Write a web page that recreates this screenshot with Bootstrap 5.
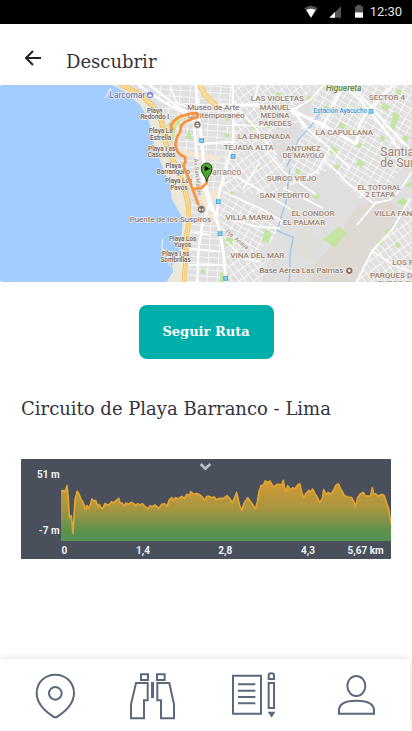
<!DOCTYPE html>
<html lang="es">
<head>
<meta charset="utf-8">
<meta name="viewport" content="width=device-width, initial-scale=1">
<title>Descubrir</title>
<link href="https://cdn.jsdelivr.net/npm/bootstrap@5.3.0/dist/css/bootstrap.min.css" rel="stylesheet">
<script src="https://cdn.jsdelivr.net/npm/bootstrap@5.3.0/dist/js/bootstrap.bundle.min.js" defer></script>
<style>
body { font-family: "Roboto Slab", "DejaVu Serif", serif; color: #33333d; background: #fff; }
.status-bar { height: 24px; background: #000; color: #e0e0e0; font: 13px/24px Roboto, sans-serif; padding-right: 10px; }
.app-header { height: 61px; padding: 0 24px; gap: 24px; }
.back-link { color: #222; line-height: 1; padding-top: 6px; }
.screen-title { font-size: 18px; line-height: 24px; padding-top: 14px; }
.route-map text { font-family: Roboto, sans-serif; fill: #9a8474; stroke: #f2f0ed; stroke-width: 4px; paint-order: stroke; text-anchor: middle; }
.route-map .area-name { font-size: 24px; font-weight: 500; }
.route-map .area-name .stacked { font-size: 23px; }
.route-map .spot-name { font-size: 24px; }
.route-map .spot-name text { fill: #7b6556; }
.route-map .beach-name { font-size: 19px; font-weight: 500; }
.route-map .beach-name text { fill: #6f6056; }
.btn-route { --bs-btn-bg: #00afaa; --bs-btn-color: #fff; --bs-btn-hover-bg: #009c97; --bs-btn-hover-color: #fff; --bs-btn-active-bg: #008c88; --bs-btn-active-color: #fff; --bs-btn-border-color: transparent; --bs-btn-hover-border-color: transparent;
  font-size: 13px; line-height: 20px; font-weight: 700; padding: 16px 20px; border-radius: 8px; min-width: 135px; margin: 23px 0 36px; }
.route-body { padding: 0 21px; }
.route-name { font-size: 18px; line-height: 28px; margin-bottom: 36px; }
.profile text { font: 700 30px Roboto, sans-serif; fill: #eef2f8; }
.tab-bar { background: #fff; padding: 13px 28px 11px 30px; margin-right: 2px; border-radius: 0 4px 0 0; box-shadow: 0 0 10px rgba(0, 0, 0, .14); }
.tab-bar svg { width: 52px; height: 48px; fill: none; stroke: #5a6a7c; stroke-width: 6; }
</style>
</head>
<body class="d-flex flex-column min-vh-100 overflow-x-hidden">
<div class="status-bar d-flex justify-content-end align-items-center">
  <svg width="68" height="24" viewBox="900 0 204 72" aria-hidden="true">
    <path fill="#555" d="M907 25Q927 10 947 25L927 53z"/><path fill="#fff" d="M913 30Q927 22 941 30L927 53z"/>
    <path fill="#555" d="M1017 19V53H982z"/><path fill="#fff" d="M999 36V53H982z"/>
    <path fill="#555" d="M1059 19h6v-4h12v4h6v18h-24z"/><path fill="#fff" d="M1059 37h24v16h-24z"/>
  </svg>
  <span>12:30</span>
</div>
<header class="app-header d-flex align-items-center">
  <a href="#" class="back-link" aria-label="Volver"><svg width="18" height="18" viewBox="0 0 18 18" fill="none" stroke="currentColor" stroke-width="2"><path d="M17 9H2M9 2 2 9l7 7"/></svg></a>
  <h1 class="screen-title fw-normal mb-0">Descubrir</h1>
</header>
<main class="flex-grow-1">
  <svg class="route-map d-block w-100" viewBox="-330 0 1236 591" role="img" aria-label="Mapa de la ruta">
    <defs>
      <pattern id="gridA" width="24" height="17" patternUnits="userSpaceOnUse" patternTransform="rotate(30)"><path d="M0 0H24M0 0V17" stroke="#fff" stroke-width="4" fill="none"/></pattern>
      <pattern id="gridB" width="30" height="19" patternUnits="userSpaceOnUse" patternTransform="rotate(4)"><path d="M0 0H30M0 0V19" stroke="#fff" stroke-width="4" fill="none"/></pattern>
      <pattern id="gridC" width="17" height="26" patternUnits="userSpaceOnUse" patternTransform="rotate(-36)"><path d="M0 0H17M0 0V26" stroke="#fff" stroke-width="4" fill="none"/></pattern>
      <clipPath id="frame"><rect x="-330" width="1236" height="591" rx="6"/></clipPath>
    </defs>
    <g clip-path="url(#frame)">
      <rect x="-330" width="1236" height="591" fill="#a3ccff"/>
      <path fill="#e0e0e0" d="M5 0 40 18 88 58 108 90 124 125 130 170 146 218 163 260 180 300 184 340 205 378 218 400 216 440 210 470 208 500 186 545 190 560 170 591H906V0z"/>
      <path fill="#ece8d9" d="M25 0 90 58 112 95 128 140 132 170 165 262 182 300 186 340 220 400 214 460 208 500 186 545 190 560 170 591H225L240 400 215 300 170 200 150 110 80 20z"/>
      <path fill="none" stroke="#e6edf2" stroke-width="4" d="M-15 40 2 10M182 545 168 500 155 490 158 462M165 510 154 520"/>
      <!-- street blocks -->
      <path fill="url(#gridB)" d="M130 0H370V170L365 290 300 330 225 300 175 170 160 80z"/>
      <path fill="url(#gridC)" d="M370 0H610L550 100 600 130 540 180 500 330 330 320 370 170z"/>
      <path fill="url(#gridA)" d="M610 0H906V150L880 240 830 320 760 360 700 300 520 310 560 170 600 120z"/>
      <path fill="url(#gridA)" d="M340 320 450 370 520 410 510 450 440 500 350 480 320 380z"/>
      <path fill="url(#gridB)" d="M245 350 320 400 340 591H215L240 420z"/>
      <path fill="url(#gridC)" d="M350 440 440 500 470 520 455 591H350z"/>
      <path fill="url(#gridC)" d="M906 340V591H730L745 540 790 490 860 400z"/>
      <!-- open ground -->
      <path fill="#dedede" d="M500 115 550 110 580 140 540 190 505 230 485 180z"/>
      <path fill="#dfdfdf" d="M540 300 660 255 750 340 840 345 870 320 890 400 780 500 730 591H460L480 540 500 440 540 400z"/>
      <path fill="#dfd9d4" d="M745 360 830 345 870 370 845 430 790 480 735 591H590L620 530 690 460 710 410z"/>
      <path fill="#dedfd8" d="M570 430 640 465 600 530 540 490z"/>
      <path fill="#f5e5d3" d="M210 192 330 215 325 228 220 212zM262 320 325 315 320 345 300 350 320 410 300 415 280 355 262 345zM360 200h22v25h-22z"/>
      <!-- parks -->
      <g fill="#c4e5a1">
        <path d="M238 132 248 165 225 160zM170 120 200 95 230 85 200 125 186 180 178 160zM405 110 450 122 435 137zM460 112 500 122 470 130zM688 425 712 443 675 488 640 463zM465 432 485 445 475 475 455 468zM350 455 370 463 365 488 345 480zM663 180 685 195 675 212 655 200zM645 60 670 72 655 84 640 75zM690 112 710 120 700 132 684 125zM770 60 792 70 780 88 760 80zM820 52 840 65 830 78 812 68zM850 80 870 90 850 140 840 130zM745 222 765 232 755 248 738 238zM560 250 575 258 565 270 555 262zM615 322 630 330 620 345 608 335zM680 235 692 242 682 256 672 248zM745 170 758 180 748 190 738 180zM595 30 610 38 600 50 590 42zM860 352l20-14 15 16-18 8zM885 300l20-10v20zM330 565h25v26h-25zM350 90l12 8-8 12-12-8zM345 145l13 3-3 12-12-4zM300 370l12 4-3 12-10-4zM272 553h12v12h-12z"/>
        <path d="M720 20l15-6-6 20zM860 10l16 5-5 16-13-6zM880 150l18 6-8 14-14-6zM815 150l12 8-8 12-11-7zM500 20l13 5-5 12-12-5zM440 240l10 5-5 9-9-5zM808 460l14 9-8 14-13-9zM830 430l12 8-8 12-10-8zM860 470l12 8-8 12-10-8zM545 195l10 6-8 12-9-6z"/>
        <circle cx="364" cy="325" r="6"/>
      </g>
      <path fill="none" stroke="#9cc3f3" stroke-width="4" d="M640 70 605 120 565 165 545 215 530 245M540 250 528 350 512 400 502 437 550 458 541 500 538 591"/>
      <!-- avenues -->
      <g fill="none" stroke="#fff" stroke-linejoin="round">
        <path stroke-width="9" d="M258 0 262 70 275 165 284 290 308 370 325 420 340 500 348 591M305 60H440L540 72 640 122 740 178M545 70 590 130M635 130 700 0M740 178 748 120 775 75 850 0"/>
        <path stroke-width="7" d="M368 0 370 170 328 320 318 410M255 178 370 170M85 0 160 50 230 88M118 0 210 70 230 80M250 90 262 240 300 350 275 430 265 500 262 591M262 240 305 380M700 0 750 45 820 130 885 215M715 0 765 45 835 125 906 200"/>
        <path stroke-width="5" d="M370 270 440 310 545 375M455 180 520 260 620 330M640 0 600 45 540 80M590 130 660 190 720 250M660 190 620 260 540 300M180 0 200 55 260 75M340 320 450 370 520 410M640 220 720 300 790 355 840 345 870 315 906 260M740 420 800 350M350 400 440 425 510 430M350 470 400 520 450 530M445 0 430 60M520 310 640 370M370 60 430 120 500 210M450 230 400 310M370 120 540 125M900 340 850 430 785 500 740 591M790 500 850 540 906 560M230 440 300 450M230 490 335 500M225 540 340 540"/>
      </g>
      <g fill="none" stroke-linejoin="round" stroke-linecap="round">
        <path stroke="#ebbf68" stroke-width="15" d="M35 0 95 30 130 65 155 110 162 160 177 205 200 245 218 290 233 350 238 400 229 460 228 520 222 591M270 0 285 30 318 62"/>
        <path stroke="#ffdf95" stroke-width="10" d="M35 0 95 30 130 65 155 110 162 160 177 205 200 245 218 290 233 350 238 400 229 460 228 520 222 591M270 0 285 30 318 62"/>
        <path stroke="#ffdf95" stroke-width="6" d="M230 92 195 108 178 155 165 175"/>
        <path stroke="#ebbf68" stroke-width="2" d="M35 0 95 30 130 65 155 110 162 160 177 205 200 245 218 290 233 350 238 400 229 460 228 520 222 591"/>
      </g>
      <g fill="#3aa9e8"><path d="M268 160h14v14h-14zM362 207h14v14h-14zM318 343h14v14h-14zM323 439h14v14h-14zM340 573h14v14h-14zM776 72h14v14h-14z"/></g>
      <path stroke="#fff" stroke-width="2" d="M271 165h8M365 212h8M321 348h8M326 444h8M343 578h8M779 77h8M271 169h8M365 216h8M321 352h8M326 448h8M343 582h8M779 81h8"/>
      <g stroke="#fff" stroke-width="2"><circle cx="120" cy="30" r="11" fill="#6c7fc6"/><circle cx="262" cy="119" r="11" fill="#826a5b"/><circle cx="274" cy="373" r="12" fill="#826a5b"/><circle cx="718" cy="557" r="11" fill="#826a5b"/></g>
      <path fill="#fff" d="M115 29h10v6h-10zM256 118l6-5 6 5zM257 120h10v4h-10zM268 378v-9l6 5 6-5v9h-3v-4h-6v4z"/><path fill="none" stroke="#fff" stroke-width="2" d="M117 29q3-8 6 0"/><circle cx="718" cy="557" r="4" fill="#fff"/>

      <text x="52" y="38" font-size="25" style="fill:#5266a8">Larcomar</text>
      <g class="beach-name">
        <text x="134" y="84">Playa</text><text x="134" y="103">Redondo I</text>
        <text x="152" y="145">Playa La</text><text x="152" y="164">Estrella</text>
        <text x="155" y="197">Playa Las</text><text x="155" y="216">Cascadas</text>
        <text x="190" y="249">Playa</text><text x="190" y="268">Barranquito</text>
        <text x="206" y="295">Playa Los</text><text x="207" y="314">Pavos</text>
        <text x="218" y="467">Playa Los</text><text x="218" y="486">Yuyos</text>
        <text x="197" y="513">Playa Las</text><text x="197" y="531">Sombrillas</text>
      </g>
      <g class="spot-name">
        <text x="310" y="75">Museo de Arte</text><text x="318" y="99">Contemporaneo</text>
        <text x="181" y="410">Puente de los Suspiros</text><text x="574" y="565">Base Aérea Las Palmas</text>
      </g>
      <text x="350" y="271" font-size="26">arranco</text>
      <g class="area-name">
        <text x="502" y="47">LAS VIOLETAS</text>
        <g class="stacked"><text x="495" y="76">MANUEL</text><text x="495" y="99">MEDINA</text><text x="496" y="122">PAREDES</text>
        <text x="580" y="197">ANTUNEZ</text><text x="580" y="220">DE MAYOLO</text><text x="808" y="314">EL TOTORAL</text><text x="810" y="337">2 ETAPA</text></g>
        <text x="462" y="161">LA ENSENADA</text><text x="416" y="195">TEJADA ALTA</text>
        <text x="703" y="151">LA CAPULLANA</text><text x="831" y="46">SECTOR 4</text><text x="545" y="289">SURCO VIEJO</text><text x="524" y="340">SAN PEDRITO</text>
        <text x="609" y="392">EL CONDOR</text><text x="582" y="421">EL PALMAR</text>
        <text x="419" y="405">VILLA MARIA</text><text x="792" y="394" style="text-anchor:start">VILLA FANNY</text><text x="442" y="518">VINA DEL MAR</text>
        <text x="847" y="539" style="text-anchor:start">LOS ROSALES</text><text x="780" y="579" style="text-anchor:start">PARQUES DE</text><text x="802" y="602" style="text-anchor:start">SURCO SUR</text>
      </g>
      <text x="701" y="18" font-size="25" font-style="italic" font-weight="500" style="fill:#528a42">Higuereta</text>
      <text x="691" y="85" font-size="19" font-weight="500" style="fill:#3b9ed6">Estación Ayacucho</text>
      <text x="811" y="213" font-size="36" style="text-anchor:start">Santiago</text><text x="811" y="246" font-size="36" style="text-anchor:start">de Surco</text>
      <text font-size="18" transform="translate(257 277) rotate(84)">Av San Martín</text><text font-size="18" transform="translate(378 468) rotate(39)">Pje. Anaya</text>
      <path fill="none" stroke="#fa923c" stroke-width="8" stroke-linejoin="round" stroke-linecap="round" d="M186 133 183 120 193 107 208 95 225 90 240 86 262 84 263 96 244 102 222 113 213 123 211 140 202 153 196 178 202 200 212 210 225 216 226 232 220 240 227 260 238 285 246 308 265 358M251 312 275 308 290 294 291 277"/>
      <path fill="#4ba82e" stroke="#263c20" stroke-width="3" d="M290 290C288 272 274 268 274 250a16 16 0 0 1 32 0C306 268 292 272 290 290z"/><path d="M284 243 300 251 284 258z"/>
    </g>
  </svg>
  <div class="text-center"><button type="button" class="btn btn-route">Seguir Ruta</button></div>
  <section class="route-body">
    <h2 class="route-name fw-normal">Circuito de Playa Barranco - Lima</h2>
    <svg class="profile d-block w-100" viewBox="18 12 1110 300" role="img" aria-label="Perfil de altitud">
      <defs><linearGradient id="height" x1="0" y1="78" x2="0" y2="258" gradientUnits="userSpaceOnUse"><stop stop-color="#d49a35"/><stop offset=".45" stop-color="#a99540"/><stop offset=".85" stop-color="#5a914e"/><stop offset="1" stop-color="#539253"/></linearGradient></defs>
      <path fill="#49505b" d="M18 12h1110v300H18z"/>
      <path fill="url(#height)" d="M138 258V108L146 106 150 112 156 92 160 130 163 188 169 182 174 235 180 135 187 108 192 118 197 130 203 140 208 152 211 164 216 152 220 160 226 150 231 132 237 138 242 136 248 154 253 148 257 158 264 160 270 145 276 150 284 148 290 140 296 144 304 136 311 130 315 145 321 144 327 154 333 144 340 148 350 142 356 146 362 152 368 146 375 150 382 146 390 155 400 162 405 152 412 155 420 150 432 160 440 148 448 146 457 154 462 136 470 128 475 136 482 128 490 132 500 124 508 130 516 118 523 122 527 110 535 118 545 116 552 118 560 124 568 136 575 124 582 124 590 128 598 126 604 135 612 130 625 130 636 122 645 132 652 144 658 130 665 112 670 135 675 155 681 166 687 145 698 128 705 138 712 148 722 162 727 140 732 110 738 92 746 90 750 78 760 82 765 78 773 92 780 95 785 88 792 88 800 90 805 76 808 96 814 110 818 92 826 104 834 98 840 102 848 90 854 86 860 110 866 130 873 115 882 106 886 112 893 102 900 116 906 125 913 142 922 132 926 104 934 118 940 112 946 118 954 110 962 92 970 86 977 102 982 110 988 122 1000 126 1010 128 1016 140 1022 154 1028 128 1035 118 1045 112 1050 122 1060 124 1067 122 1072 98 1076 116 1084 118 1090 124 1100 118 1108 122 1115 145 1120 158 1123 175 1128 205V258z"/>
      <path fill="none" stroke="#e3a42f" stroke-width="5" stroke-linejoin="round" d="M138 108 146 106 150 112 156 92 160 130 163 188 169 182 174 235 180 135 187 108 192 118 197 130 203 140 208 152 211 164 216 152 220 160 226 150 231 132 237 138 242 136 248 154 253 148 257 158 264 160 270 145 276 150 284 148 290 140 296 144 304 136 311 130 315 145 321 144 327 154 333 144 340 148 350 142 356 146 362 152 368 146 375 150 382 146 390 155 400 162 405 152 412 155 420 150 432 160 440 148 448 146 457 154 462 136 470 128 475 136 482 128 490 132 500 124 508 130 516 118 523 122 527 110 535 118 545 116 552 118 560 124 568 136 575 124 582 124 590 128 598 126 604 135 612 130 625 130 636 122 645 132 652 144 658 130 665 112 670 135 675 155 681 166 687 145 698 128 705 138 712 148 722 162 727 140 732 110 738 92 746 90 750 78 760 82 765 78 773 92 780 95 785 88 792 88 800 90 805 76 808 96 814 110 818 92 826 104 834 98 840 102 848 90 854 86 860 110 866 130 873 115 882 106 886 112 893 102 900 116 906 125 913 142 922 132 926 104 934 118 940 112 946 118 954 110 962 92 970 86 977 102 982 110 988 122 1000 126 1010 128 1016 140 1022 154 1028 128 1035 118 1045 112 1050 122 1060 124 1067 122 1072 98 1076 116 1084 118 1090 124 1100 118 1108 122 1115 145 1120 158 1123 175 1128 205"/>
      <path fill="none" stroke="#bcc2c9" stroke-width="8" d="M557 27 571 41 586 27"/>
      <text x="134" y="69" text-anchor="end">51 m</text><text x="134" y="236" text-anchor="end">-7 m</text>
      <text x="148" y="298" text-anchor="middle">0</text><text x="384" y="298" text-anchor="middle">1,4</text><text x="631" y="298" text-anchor="middle">2,8</text><text x="879" y="298" text-anchor="middle">4,3</text><text x="1106" y="298" text-anchor="end">5,67 km</text>
    </svg>
  </section>
</main>
<nav class="tab-bar d-flex justify-content-between sticky-bottom" aria-label="Principal">
  <a href="#" class="d-block" aria-label="Lugares"><svg class="d-block" viewBox="90 66 156 144"><path d="M166 74c-32 0-56 24-56 55 0 34 30 58 50 71q6 4 12 0c20-13 50-37 50-71 0-31-24-55-56-55z"/><circle cx="166" cy="130" r="19"/></svg></a>
  <a href="#" class="d-block" aria-label="Descubrir"><svg class="d-block" viewBox="390 66 156 144"><path d="M423 73h21v17h-21zM471 73h23v17h-23zM408 99h35v52H432v54H393V163zM472 99h36l14 64v42H483V151H472z"/><path fill="#5a6a7c" d="M456 99h3v42h-3z"/></svg></a>
  <a href="#" class="d-block" aria-label="Diario"><svg class="d-block" viewBox="72 66 156 144"><path d="M81 77h84v114H81zM96 103h52M96 122h52M96 141h52M96 160h52M188 99h16v75h-16zM188 87V77q0-7 8-7t8 7v10z"/><path fill="#5a6a7c" stroke="none" d="M185 185h23l-11 18z"/></svg></a>
  <a href="#" class="d-block" aria-label="Perfil"><svg class="d-block" viewBox="372 66 156 144"><ellipse cx="451" cy="108" rx="27" ry="30"/><path d="M399 191V181c0-20 20-29 52-29s53 9 53 29v10z"/></svg></a>
</nav>
</body>
</html>
